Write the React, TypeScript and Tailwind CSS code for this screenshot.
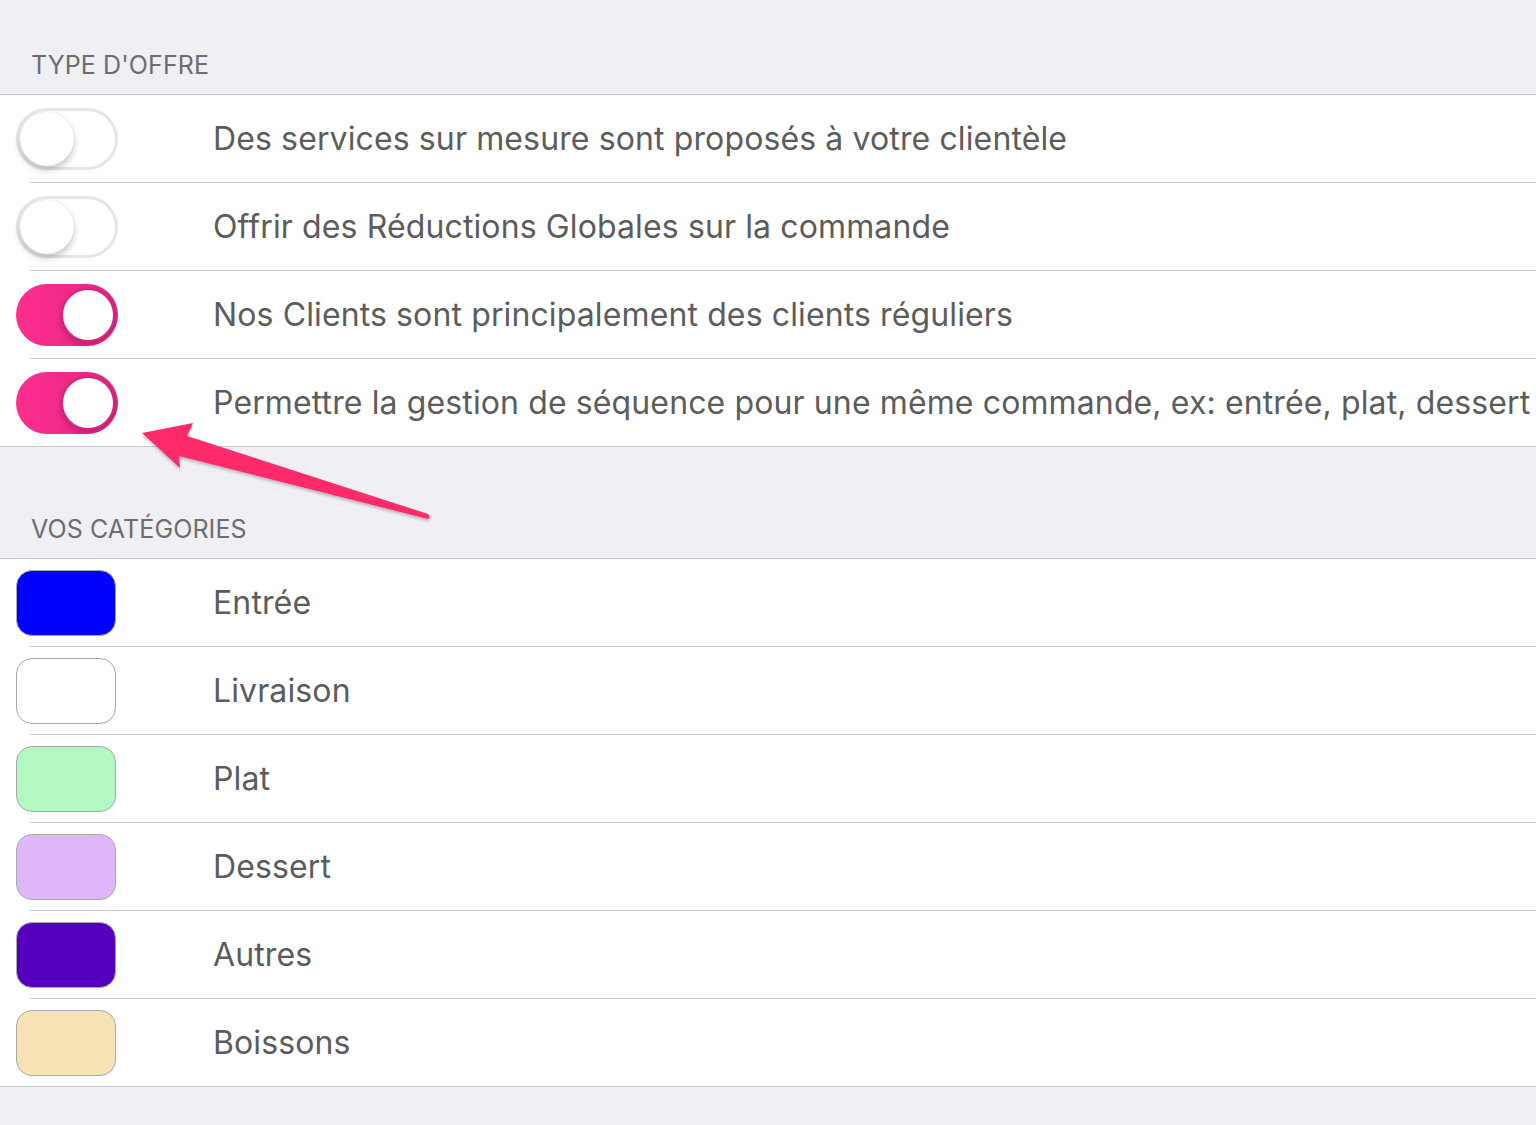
import { type ReactNode } from "react";

const font = { fontFamily: "Inter, 'Noto Sans', sans-serif" };

// iOS style switch, only the picture of it
function Toggle({ on }: { on: boolean }) {
  if (on) {
    return (
      <div className="relative h-[62px] w-[102px] rounded-full bg-gradient-to-r from-[#ff2e8f] to-[#e22682]">
        <div className="absolute right-[3px] top-[4px] h-[54px] w-[54px] rounded-full border-2 border-[#d8257c] bg-white shadow-[0_3px_6px_rgba(0,0,0,0.2)]" />
      </div>
    );
  }
  return (
    <div className="relative h-[62px] w-[102px] rounded-full border-[3px] border-[#e6e6e6] bg-white">
      <div className="absolute left-[1px] top-[1px] h-[54px] w-[54px] rounded-full bg-white shadow-[0_4px_7px_rgba(0,0,0,0.22),0_0_1px_rgba(0,0,0,0.15)]" />
    </div>
  );
}

function Swatch({ color }: { color: string }) {
  return (
    <div
      className="h-[66px] w-[100px] rounded-[16px] border border-[#a9a9ad]"
      style={{ backgroundColor: color }}
    />
  );
}

function Header({ label, height }: { label: string; height: string }) {
  return (
    <div className={`flex items-end pl-[31px] pb-[14px] ${height}`}>
      <span className="text-[25px] leading-[30px] tracking-[0.1px] text-[#6d6d72]">{label}</span>
    </div>
  );
}

function Row({ left, text, last }: { left: ReactNode; text: string; last?: boolean }) {
  return (
    <div className="bg-white">
      <div className="flex h-[87px] items-center pl-[16px]">
        <div className="w-[197px] shrink-0">{left}</div>
        <span className="whitespace-nowrap text-[32px] tracking-[0.12px] text-[#5c5c5c]">{text}</span>
      </div>
      {!last && <div className="ml-[30px] h-px bg-[#c8c7cc]" />}
    </div>
  );
}

const offres = [
  { on: false, text: "Des services sur mesure sont proposés à votre clientèle" },
  { on: false, text: "Offrir des Réductions Globales sur la commande" },
  { on: true, text: "Nos Clients sont principalement des clients réguliers" },
  { on: true, text: "Permettre la gestion de séquence pour une même commande, ex: entrée, plat, dessert" },
];

const categories = [
  { color: "#0000ff", name: "Entrée" },
  { color: "#ffffff", name: "Livraison" },
  { color: "#b3f7c3", name: "Plat" },
  { color: "#dfb6f7", name: "Dessert" },
  { color: "#5500bf", name: "Autres" },
  { color: "#f6e2b4", name: "Boissons" },
];

export default function App() {
  return (
    <div className="relative min-h-[1125px] w-full overflow-hidden bg-[#efeff4]" style={font}>
      <Header label="TYPE D'OFFRE" height="h-[94px]" />
      <div className="border-y border-[#c8c7cc]">
        {offres.map((o, i) => (
          <Row key={i} left={<Toggle on={o.on} />} text={o.text} last={i === offres.length - 1} />
        ))}
      </div>

      <Header label="VOS CATÉGORIES" height="h-[111px]" />
      <div className="border-y border-[#c8c7cc]">
        {categories.map((c, i) => (
          <Row key={c.name} left={<Swatch color={c.color} />} text={c.name} last={i === categories.length - 1} />
        ))}
      </div>

      {/* annotation arrow over the page */}
      <svg className="pointer-events-none absolute left-0 top-0" width="500" height="560">
        <defs>
          <filter id="sh" x="-10%" y="-10%" width="120%" height="130%">
            <feDropShadow dx="0" dy="2" stdDeviation="1.5" floodColor="#000" floodOpacity="0.25" />
          </filter>
        </defs>
        <path
          d="M142 433 L193 423 L187 436 L428 514 Q431 517 428 519 L179 456 L180 468 Z"
          fill="#fe2a6a"
          filter="url(#sh)"
        />
      </svg>
    </div>
  );
}
